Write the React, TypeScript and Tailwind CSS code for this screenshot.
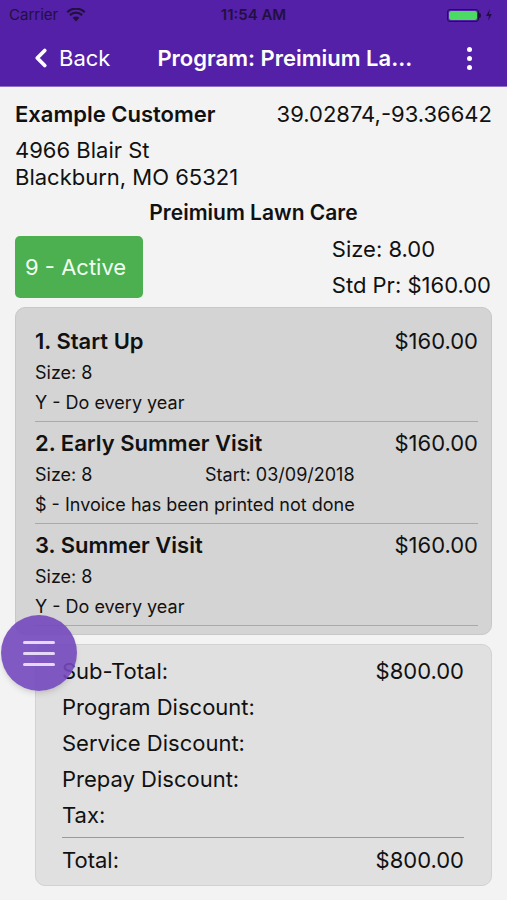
import { ChevronLeft } from "lucide-react";

const items = [
  { title: "1. Start Up", price: "$160.00", size: "Size: 8", start: "", note: "Y - Do every year" },
  { title: "2. Early Summer Visit", price: "$160.00", size: "Size: 8", start: "Start: 03/09/2018", note: "$ - Invoice has been printed not done" },
  { title: "3. Summer Visit", price: "$160.00", size: "Size: 8", start: "", note: "Y - Do every year" },
];

const totals = [
  { label: "Sub-Total:", value: "$800.00" },
  { label: "Program Discount:", value: "" },
  { label: "Service Discount:", value: "" },
  { label: "Prepay Discount:", value: "" },
  { label: "Tax:", value: "" },
];

const StatusBar = () => (
  <div className="h-[30px] flex items-center px-[9px] text-[15px] text-[#22103f] relative">
    <span>Carrier</span>
    <svg width="20" height="14" viewBox="0 0 20 14" className="ml-[8px]">
      <path d="M10 13.5 L6.6 9.8 A4.8 4.8 0 0 1 13.4 9.8 Z" fill="#22103f" />
      <path d="M3.9 7.1 A8.6 8.6 0 0 1 16.1 7.1" stroke="#22103f" strokeWidth="2.2" fill="none" />
      <path d="M1.2 4.3 A12.4 12.4 0 0 1 18.8 4.3" stroke="#22103f" strokeWidth="2.2" fill="none" />
    </svg>
    <span className="absolute left-1/2 -translate-x-1/2 font-semibold">11:54 AM</span>
    <div className="ml-auto flex items-center mr-[5px]">
      <div className="w-[32px] h-[13px] rounded-[3px] border border-[#22103f] p-[1px]">
        <div className="w-full h-full rounded-[2px] bg-[#4cd964]" />
      </div>
      <div className="w-[2px] h-[5px] bg-[#22103f] rounded-r-sm" />
      <svg width="8" height="12" viewBox="0 0 8 12" className="ml-[4px]">
        <path d="M5 0 L1 7 H4 L3 12 L7 5 H4 Z" fill="#22103f" />
      </svg>
    </div>
  </div>
);

export default function App() {
  return (
    <div className="w-[507px] h-[900px] bg-[#f3f3f3] overflow-hidden relative" style={{ fontFamily: "Inter, 'Liberation Sans', sans-serif" }}>
      <div className="bg-[#5420a8] border-b border-[#8d6fc6]">
        <StatusBar />
        <div className="h-[56px] flex items-center text-white">
          <ChevronLeft className="ml-[26px] w-[30px] h-[30px]" strokeWidth={3} />
          <span className="text-[22px] ml-[3px]">Back</span>
          <span className="ml-[47px] text-[22px] font-semibold">Program: Preimium La...</span>
          <div className="ml-auto mr-[35px] flex flex-col gap-[4px]">
            <div className="w-[5px] h-[5px] rounded-full bg-white" />
            <div className="w-[5px] h-[5px] rounded-full bg-white" />
            <div className="w-[5px] h-[5px] rounded-full bg-white" />
          </div>
        </div>
      </div>

      <div className="px-[15px] text-[#111]">
        <div className="flex justify-between items-center pt-[13px] leading-[28px]">
          <span className="text-[22px] font-semibold">Example Customer</span>
          <span className="text-[22px]">39.02874,-93.36642</span>
        </div>
        <div className="text-[22px] leading-[27px] mt-[9px]">
          <div>4966 Blair St</div>
          <div>Blackburn, MO 65321</div>
        </div>
        <div className="text-center text-[21px] leading-[28px] font-semibold mt-[8px]">Preimium Lawn Care</div>
        <div className="flex justify-between items-start mt-[9px]">
          <div className="w-[128px] h-[62px] rounded-[5px] bg-[#4caf50] text-[#f0fff0] text-[22px] flex items-center px-[10px]">9 - Active</div>
          <div className="text-[22px] leading-[36px] -mt-[5px] -mb-[5px] pr-[1px]">
            <div>Size: 8.00</div>
            <div>Std Pr: $160.00</div>
          </div>
        </div>

        <div className="mt-[9px] bg-[#d4d4d4] rounded-[10px] border border-[#c8c8c8] pl-[19px] pr-[13px] pt-[19px] pb-[8px]">
          {items.map((it) => (
            <div key={it.title} className="border-b border-[#a9a9a9] pb-[7px] mb-[7px] last:mb-0">
              <div className="flex justify-between items-center leading-[28px]">
                <span className="text-[22px] font-semibold">{it.title}</span>
                <span className="text-[22px]">{it.price}</span>
              </div>
              <div className="flex text-[18px] mt-[6px] leading-[23px]">
                <span className="w-[170px]">{it.size}</span>
                <span>{it.start}</span>
              </div>
              <div className="text-[18px] mt-[7px] leading-[23px]">{it.note}</div>
            </div>
          ))}
        </div>

        <div className="mt-[9px] ml-[20px] bg-[#e0e0e0] rounded-[10px] border border-[#d2d2d2] pl-[26px] pr-[27px] pt-[8px] pb-[7px] text-[22px]">
          {totals.map((t) => (
            <div key={t.label} className="flex justify-between leading-[36px]">
              <span>{t.label}</span>
              <span>{t.value}</span>
            </div>
          ))}
          <div className="border-t border-[#9a9a9a] mt-[4px] pt-[4px] flex justify-between leading-[36px]">
            <span>Total:</span>
            <span>$800.00</span>
          </div>
        </div>
      </div>

      <div className="absolute left-[1px] top-[615px] w-[76px] h-[76px] rounded-full bg-[#7448bd]/90 flex flex-col items-center justify-center gap-[8px] shadow-md">
        <div className="w-[32px] h-[3px] bg-[#e6d8f8] rounded" />
        <div className="w-[32px] h-[3px] bg-[#e6d8f8] rounded" />
        <div className="w-[32px] h-[3px] bg-[#e6d8f8] rounded" />
      </div>
    </div>
  );
}
